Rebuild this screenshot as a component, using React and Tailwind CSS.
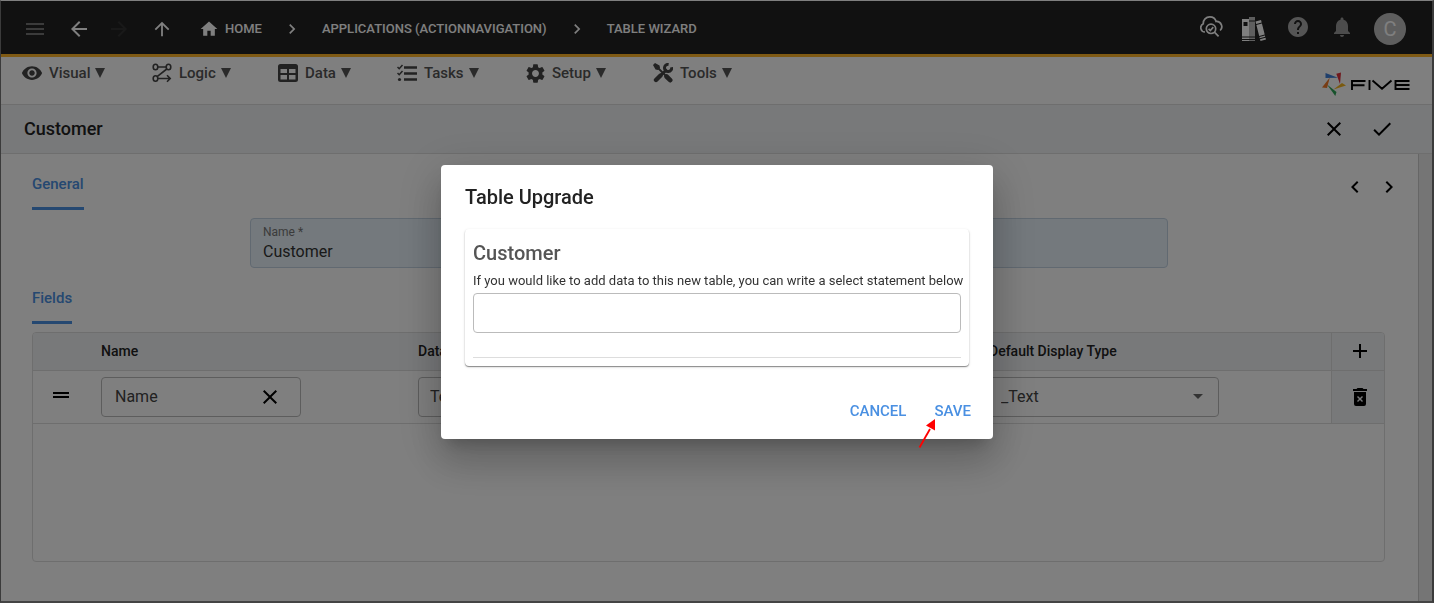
import React, { useState } from "react";
import {
    MdAdd,
    MdArrowBack,
    MdArrowForward,
    MdArrowUpward,
    MdCheck,
    MdChevronLeft,
    MdChevronRight,
    MdClose,
    MdDragHandle,
    MdHelp,
    MdHome,
    MdMenu,
    MdNotifications,
    MdSettings,
    MdVisibility,
} from "react-icons/md";

const LogicIcon = () => (
    <svg width="20" height="20" viewBox="0 0 20 20" fill="none" stroke="currentColor" strokeWidth="1.6">
        <ellipse cx="3.5" cy="4" rx="2.3" ry="2.8" />
        <ellipse cx="16.5" cy="4" rx="2.3" ry="2.8" />
        <ellipse cx="3.5" cy="15.5" rx="2.3" ry="2.8" />
        <path d="M6 4h8M14.8 6L5.4 13.3M6 15.5h12M15 12.3l3.2 3.2-3.2 3.2" />
    </svg>
);

const DataIcon = () => (
    <svg width="20" height="18" viewBox="0 0 20 18">
        <path
            fill="currentColor"
            fillRule="evenodd"
            d="M2.5 0h15A2.5 2.5 0 0 1 20 2.5v13a2.5 2.5 0 0 1-2.5 2.5h-15A2.5 2.5 0 0 1 0 15.5v-13A2.5 2.5 0 0 1 2.5 0zM2.5 5v4H9V5zM11 5v4h6.5V5zM2.5 11v4.5H9V11zM11 11v4.5h6.5V11z"
        />
    </svg>
);

const TasksIcon = () => (
    <svg width="20" height="18" viewBox="0 0 20 18" fill="none" stroke="currentColor">
        <path strokeWidth="2.4" d="M7 3.5h13M7 9.5h13M7 15.5h13" />
        <path strokeWidth="1.5" d="M.5 3l1.7 1.7L5.5 1M.5 9l1.7 1.7L5.5 7" />
        <circle cx="2.5" cy="15.5" r="1.6" fill="currentColor" stroke="none" />
    </svg>
);

const ToolsIcon = () => (
    <svg width="20" height="20" viewBox="0 0 20 20" fill="none" stroke="currentColor">
        <path strokeWidth="4.4" strokeLinecap="round" d="M3 17l4.5-4.5" />
        <path strokeWidth="3" d="M7.5 12.5L14 6.5" />
        <path strokeWidth="3" d="M18.6 4.2a3.6 3.6 0 1 1-3-2.8" />
        <path strokeWidth="1.8" d="M3 3l10 10" />
        <path fill="currentColor" stroke="none" d="M0 2l2-2 4.5 2.5.5 2.5-2 2-2.500-.5z" />
        <path strokeWidth="4.6" strokeLinecap="round" d="M13.5 13.5l3.7 3.7" />
    </svg>
);

const CloudIcon = () => (
    <svg width="24" height="24" viewBox="0 0 24 24" fill="none" stroke="currentColor" strokeWidth="1.7">
        <path d="M5 17A4.3 4.3 0 0 1 3.3 8.800C3 4.800 6 1.800 9.800 1.800c3 0 5.500 1.800 6.300 4.700a5.200 5.200 0 0 1 4 9" />
        <circle cx="11" cy="13.8" r="4.700" />
        <path d="M8.6 13.8l1.700 1.700 3-3.400M14.4 17.200l4.200 4.200" />
    </svg>
);

const BooksIcon = () => (
    <svg width="26" height="26" viewBox="0 0 26 26" fill="currentColor">
        <path fillRule="evenodd" d="M2 3h7v22H2zM3.5 6v4h4V6zM2 20.5v1h7v-1zM2 23v1h7v-1z" />
        <path fillRule="evenodd" opacity=".7" d="M9 1h6v24H9zM9 4.500v1h6v-1zM9 20.500v1h6v-1zM9 23v1h6v-1z" />
        <path d="M15.500 5.500l5.500-1.500.7 2.500-5.500 1.500zM16.400 9l5.500-1.500 2.800 11-5.500 1.500zM19.400 21l5.500-1.500.3 1.200-5.500 1.500zM20 23.200l5.500-1.500.5 1.800-5.500 1.500z" />
    </svg>
);

const DeleteIcon = () => (
    <svg width="14" height="18" viewBox="0 0 14 18">
        <path
            fill="currentColor"
            fillRule="evenodd"
            d="M4.5 0h5l1 1H14v2H0V1h3.5zM1 4h12v12a2 2 0 0 1-2 2H3a2 2 0 0 1-2-2zM5 8L4 9l2 2-2 2 1 1 2-2 2 2 1-1-2-2 2-2-1-1-2 2z"
        />
    </svg>
);

const FiveLogo = () => (
    <svg width="88" height="24" viewBox="0 0 88 24" role="img" aria-label="Five">
        <path fill="#3f7fd8" d="M3.5 1L16 5.7 3.5 6z" />
        <path fill="#e0313b" d="M19 .5L18 12 14.3 1.8z" />
        <path fill="#f5b51f" d="M24 13.5L11.5 17.5 20 11z" />
        <path fill="#2fa558" d="M5 12.5l9.5 7.500-1.200 4z" />
        <path fill="#f07a2b" d="M7.8 5.5L5 16l-5-.5z" />
        <g fill="none" stroke="#000" strokeWidth="1.9">
            <path d="M30 18V9H43.500M30 13.300H42.500M47.500 8V18M50.500 8.500l9.500 8.300 9.500-8.300M87.500 9H73.500V17H87.500M73.500 13H87.500" />
        </g>
    </svg>
);

const menuItems = [
    { label: "Visual", icon: <MdVisibility size={22} />, width: "w-[130px]" },
    { label: "Logic", icon: <LogicIcon />, width: "w-[126px]" },
    { label: "Data", icon: <DataIcon />, width: "w-[119px]" },
    { label: "Tasks", icon: <TasksIcon />, width: "w-32" },
    { label: "Setup", icon: <MdSettings size={23} />, width: "w-32" },
    { label: "Tools", icon: <ToolsIcon />, width: "w-32" },
];

const TopBar = () => (
    <header className="flex h-14 items-center justify-between border-b-3 border-[#feb428] bg-[#222] pt-0.5 pr-[26px] pl-[22px] text-white">
        <div className="flex items-center">
            <button aria-label="Menu" className="mr-5 text-[#777]">
                <MdMenu size={24} />
            </button>
            <button aria-label="Back" className="mr-4">
                <MdArrowBack size={24} />
            </button>
            <button aria-label="Forward" className="mr-5 text-[#333]" disabled>
                <MdArrowForward size={24} />
            </button>
            <button aria-label="Up" className="mr-[26px]">
                <MdArrowUpward size={22} />
            </button>
            <nav className="flex items-center text-[13px] font-medium">
                <a href="#home" className="flex items-center gap-1.5">
                    <MdHome size={20} />
                    HOME
                </a>
                <MdChevronRight size={20} className="mx-5" />
                <a href="#applications">APPLICATIONS (ACTIONNAVIGATION)</a>
                <MdChevronRight size={20} className="mx-5" />
                <a href="#wizard">TABLE WIZARD</a>
            </nav>
        </div>
        <div className="flex items-center">
            <button aria-label="Check deployment" className="mr-4 mb-1">
                <CloudIcon />
            </button>
            <button aria-label="Library" className="mr-5">
                <BooksIcon />
            </button>
            <button aria-label="Help" className="mr-5 mb-1 text-[#aaa]">
                <MdHelp size={24} />
            </button>
            <button aria-label="Notifications" className="mr-5 mb-1 text-[#999]">
                <MdNotifications size={24} />
            </button>
            <button className="h-8 w-8 rounded-full bg-[#bdbdbd] text-xl text-white">C</button>
        </div>
    </header>
);

const MenuBar = () => (
    <div className="flex h-12 items-start justify-between border-b border-[#ddd] bg-white pr-[22px] pl-[19px]">
        <nav className="flex pt-1.5">
            {menuItems.map((item) => (
                <div key={item.label} className={item.width}>
                    <button className="flex h-5 items-center gap-[5px] text-[15px] font-medium text-[#555]">
                        <span className="flex w-6 justify-center text-[#444]">{item.icon}</span>
                        {item.label}
                        <svg width="10" height="10" viewBox="0 0 10 10" fill="currentColor">
                            <path d="M0 0h10L5 10z" />
                        </svg>
                    </button>
                </div>
            ))}
        </nav>
        <div className="pt-[15px]">
            <FiveLogo />
        </div>
    </div>
);

const SectionTab = ({ children }) => (
    <button className="block h-10 border-b-3 border-[#4a90e2] pb-2 text-[15px] font-medium text-[#4a90e2]">
        {children}
    </button>
);

const FieldsTable = () => (
    <div className="mt-2 mr-4 h-[230px] overflow-hidden rounded border border-[#ddd]">
        <table className="w-full table-fixed border-collapse text-left text-sm text-[#222]">
            <colgroup>
                <col className="w-[68px]" />
                <col className="w-[317px]" />
                <col />
                <col className="w-[342px]" />
                <col className="w-[53px]" />
            </colgroup>
            <thead className="bg-[#f0f2f5]">
                <tr className="h-[37px] border-b border-[#ddd]">
                    <th aria-label="Order" />
                    <th className="font-medium">Name</th>
                    <th className="font-medium">Data Type</th>
                    <th className="font-medium">Default Display Type</th>
                    <th className="border-l border-[#ddd] pl-1">
                        <button aria-label="Add field" className="flex w-full justify-center text-black">
                            <MdAdd size={24} />
                        </button>
                    </th>
                </tr>
            </thead>
            <tbody>
                <tr className="h-[53px] border-b border-[#ddd]">
                    <td>
                        <MdDragHandle size={24} className="mb-1 ml-4 text-black" />
                    </td>
                    <td>
                        <div className="flex h-10 w-[200px] items-center rounded border border-[#bbb] pr-[18px] pl-[13px]">
                            <input
                                aria-label="Name"
                                defaultValue="Name"
                                className="min-w-0 flex-1 text-base text-[#444] outline-none"
                            />
                            <button aria-label="Clear" className="text-black">
                                <MdClose size={24} />
                            </button>
                        </div>
                    </td>
                    <td>
                        <select
                            aria-label="Data type"
                            className="h-10 w-[230px] appearance-none rounded border border-[#bbb] px-[11px] text-base text-[#444]"
                        >
                            <option>Text</option>
                        </select>
                    </td>
                    <td>
                        <div className="flex w-[230px] items-center">
                            <select
                                aria-label="Default display type"
                                className="h-10 w-full appearance-none rounded border border-[#bbb] px-[11px] text-base text-[#444]"
                            >
                                <option>_Text</option>
                            </select>
                            <svg width="10" height="5" viewBox="0 0 10 5" fill="#666" className="pointer-events-none -ml-[26px]">
                                <path d="M0 0h10L5 5z" />
                            </svg>
                        </div>
                    </td>
                    <td className="border-l border-[#ddd] bg-[#f0f2f5] pl-1">
                        <button aria-label="Delete field" className="flex w-full justify-center text-black">
                            <DeleteIcon />
                        </button>
                    </td>
                </tr>
            </tbody>
        </table>
    </div>
);

const UpgradeDialog = () => {
    const [query, setQuery] = useState("");

    return (
        <div className="fixed inset-0 flex items-center justify-center bg-black/50">
            <div
                role="dialog"
                aria-labelledby="upgrade-title"
                className="relative w-[552px] rounded bg-white px-[22px] pt-4 pb-3 shadow-[0_11px_15px_-7px_rgba(0,0,0,0.2),0_24px_38px_3px_rgba(0,0,0,0.14),0_9px_46px_8px_rgba(0,0,0,0.12)]"
            >
                <h2 id="upgrade-title" className="px-0.5 text-xl leading-8 font-medium text-[#222]">
                    Table Upgrade
                </h2>
                <div className="mx-0.5 mt-4 rounded p-2 shadow-[0_1px_1px_rgba(0,0,0,0.4),0_1px_3px_rgba(0,0,0,0.15)]">
                    <h3 className="text-xl leading-8 font-medium text-[#555]">Customer</h3>
                    <label htmlFor="statement" className="block text-[13px] leading-6 whitespace-nowrap text-[#333]">
                        If you would like to add data to this new table, you can write a select statement below
                    </label>
                    <input
                        id="statement"
                        value={query}
                        onChange={(e) => setQuery(e.target.value)}
                        className="block h-10 w-full rounded border border-[#bbb] px-3 outline-none"
                    />
                    <hr className="mt-6 border-[#ddd]" />
                </div>
                <div className="mt-[29px] flex justify-end gap-7 text-[15px] leading-8 font-medium text-[#4a90e2]">
                    <button>CANCEL</button>
                    <button>SAVE</button>
                </div>
                <svg width="18" height="30" viewBox="0 0 18 30" className="absolute right-[57px] -bottom-2.5">
                    <path d="M1.5 28.5L12 10" stroke="#f00" strokeWidth="1.8" />
                    <path d="M17 0v11.500L8 6.500z" fill="#f00" />
                </svg>
            </div>
        </div>
    );
};

const App = () => {
    return (
        <div className="flex min-h-screen flex-col border-t border-r-2 border-b-2 border-l border-t-white border-r-[#777] border-b-[#888] border-l-[#777] bg-white font-['Roboto',sans-serif]">
            <TopBar />
            <MenuBar />
            <div className="flex h-[49px] items-center justify-between border-b border-[#ddd] bg-[#f0f2f5] pr-[38px] pl-[23px]">
                <h1 className="text-lg font-medium text-[#222]">Customer</h1>
                <div className="flex gap-6 text-black">
                    <button aria-label="Cancel">
                        <MdClose size={24} />
                    </button>
                    <button aria-label="Accept">
                        <MdCheck size={24} />
                    </button>
                </div>
            </div>
            <div className="flex flex-1">
                <main className="flex-1 pt-4 pr-[17px] pl-[31px]">
                    <div className="flex items-start justify-between">
                        <SectionTab>General</SectionTab>
                        <div className="flex gap-2.5 pt-[5px] text-black">
                            <button aria-label="Previous">
                                <MdChevronLeft size={24} />
                            </button>
                            <button aria-label="Next">
                                <MdChevronRight size={24} />
                            </button>
                        </div>
                    </div>
                    <div className="mt-2 mr-[15px] flex justify-center">
                        <div className="flex h-[50px] w-[918px] flex-col rounded border border-[#c3d3e3] bg-[#e8f2fa] px-3 pt-[5px]">
                            <label htmlFor="table-name" className="text-xs leading-4 text-[#777]">
                                Name *
                            </label>
                            <input
                                id="table-name"
                                defaultValue="Customer"
                                className="text-base leading-6 text-[#333] outline-none"
                            />
                        </div>
                    </div>
                    <div className="mt-4">
                        <SectionTab>Fields</SectionTab>
                    </div>
                    <FieldsTable />
                </main>
                <div className="w-3.5 border-l border-[#ccc] bg-[#eaeaea]" />
            </div>
            <UpgradeDialog />
        </div>
    );
};

export default App;
